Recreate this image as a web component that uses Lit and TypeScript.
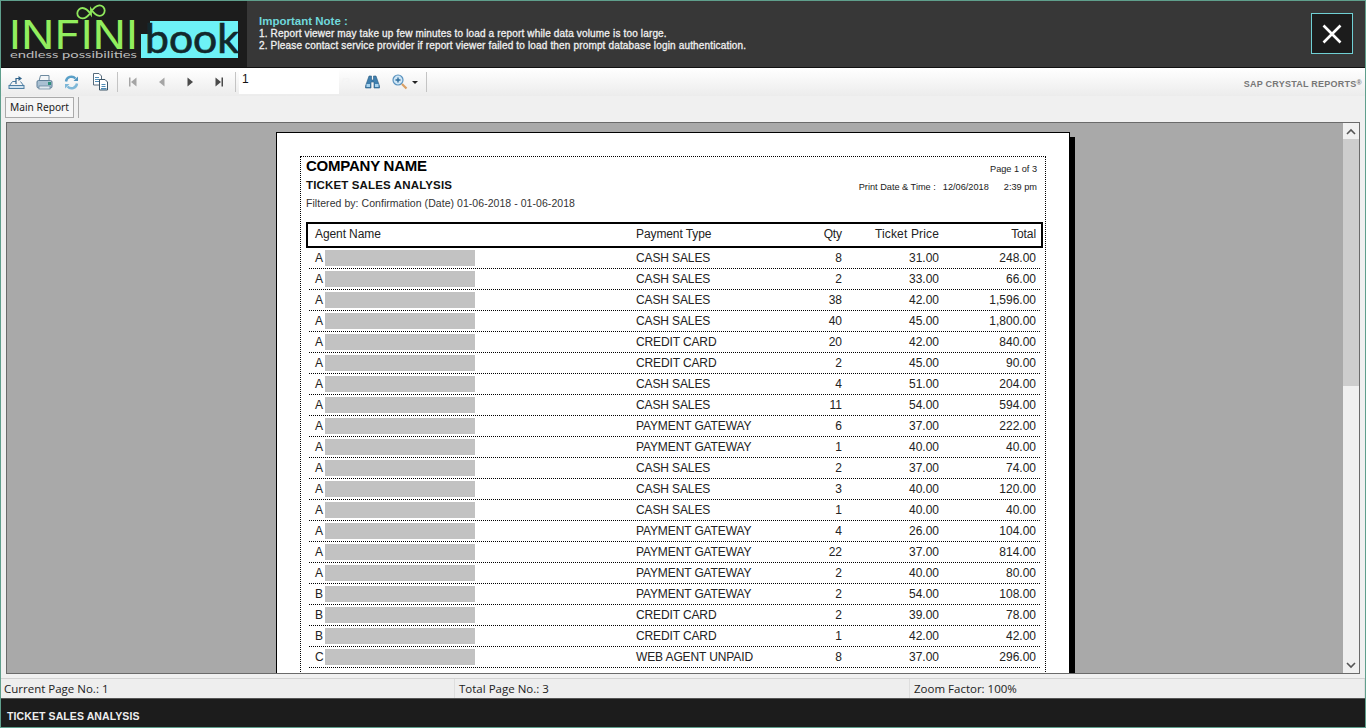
import { LitElement, html, css, svg } from "lit";
import { customElement } from "lit/decorators.js";

const rows: [string, string, string, string, string][] = [
  ["A", "CASH SALES", "8", "31.00", "248.00"],
  ["A", "CASH SALES", "2", "33.00", "66.00"],
  ["A", "CASH SALES", "38", "42.00", "1,596.00"],
  ["A", "CASH SALES", "40", "45.00", "1,800.00"],
  ["A", "CREDIT CARD", "20", "42.00", "840.00"],
  ["A", "CREDIT CARD", "2", "45.00", "90.00"],
  ["A", "CASH SALES", "4", "51.00", "204.00"],
  ["A", "CASH SALES", "11", "54.00", "594.00"],
  ["A", "PAYMENT GATEWAY", "6", "37.00", "222.00"],
  ["A", "PAYMENT GATEWAY", "1", "40.00", "40.00"],
  ["A", "CASH SALES", "2", "37.00", "74.00"],
  ["A", "CASH SALES", "3", "40.00", "120.00"],
  ["A", "CASH SALES", "1", "40.00", "40.00"],
  ["A", "PAYMENT GATEWAY", "4", "26.00", "104.00"],
  ["A", "PAYMENT GATEWAY", "22", "37.00", "814.00"],
  ["A", "PAYMENT GATEWAY", "2", "40.00", "80.00"],
  ["B", "PAYMENT GATEWAY", "2", "54.00", "108.00"],
  ["B", "CREDIT CARD", "2", "39.00", "78.00"],
  ["B", "CREDIT CARD", "1", "42.00", "42.00"],
  ["C", "WEB AGENT UNPAID", "8", "37.00", "296.00"],
];

const logo = svg`
  <svg class="logo" width="246" height="66" viewBox="0 0 246 66">
    <path d="M85 13.5c-3-4.500-5.500-6.500-8.500-6.500a5.200 5.200 0 0 0 0 10.400c3 0 5.500-2 8.500-6.500s5.500-6.500 8.500-6.500a5.200 5.200 0 0 1 0 10.400c-3 0-5.500-2-8.500-6.500z" transform="translate(5 0)" fill="none" stroke="#8fe85c" stroke-width="1.800"/>
    <text x="8" y="48" font-family="Inter, 'Liberation Sans', sans-serif" font-weight="400" font-size="39" fill="#92ee5e" textLength="129" lengthAdjust="spacingAndGlyphs">INFINI</text>
    <text x="9" y="57" font-family="Lato, 'DejaVu Sans', sans-serif" font-size="8.500" fill="#bdbdbd" textLength="127" lengthAdjust="spacingAndGlyphs">endless possibilities</text>
    <path d="M149 20H237V57H140V33H149z" fill="#6df2f6"/>
    <text x="144" y="52" font-family="Lato, 'Open Sans', sans-serif" font-weight="400" font-size="41" fill="#12282c" stroke="#12282c" stroke-width=".7" textLength="94" lengthAdjust="spacingAndGlyphs">book</text>
  </svg>`;

const iconExport = svg`<svg width="17" height="17" viewBox="0 0 17 17"><path d="M1.500 11.500 4.500 7.500H8M12.500 7.500 15.500 11.500" fill="none" stroke="#4d7ea3" stroke-width="1"/><rect x="1" y="11.500" width="15" height="3" fill="#cfe2ef" stroke="#4d7ea3"/><path d="M8 10V4.500H11" fill="none" stroke="#33658c" stroke-width="1.200"/><path d="M10.500 2 14 4.500 10.500 7z" fill="#33658c"/></svg>`;
const iconPrint = svg`<svg width="17" height="17" viewBox="0 0 17 17"><path d="M4.500 1.500H13V7H3z" fill="#f3f6f8" stroke="#6d8aa0"/><rect x="1" y="6.500" width="15" height="7.500" rx="1.500" fill="#a9c0d2" stroke="#5f7f98"/><rect x="3" y="12" width="11" height="3" fill="#dfe8ee" stroke="#5f7f98" stroke-width=".7"/><rect x="12" y="8" width="3" height="3" fill="#2f8f7a"/></svg>`;
const iconRefresh = svg`<svg width="15" height="15" viewBox="0 0 15 15"><path d="M2 6.500A5.500 5.500 0 0 1 11.500 3.500" fill="none" stroke="#5aa0c8" stroke-width="2.400"/><path d="M9.500 6H14V1.500z" fill="#4f93bd"/><path d="M13 8.500A5.500 5.500 0 0 1 3.500 11.500" fill="none" stroke="#7fb8d8" stroke-width="2.400"/><path d="M5.500 9H1v4.500z" fill="#7fb8d8"/></svg>`;
const iconCopy = svg`<svg width="17" height="18" viewBox="0 0 17 18"><path d="M1.500.5H7L9.500 3V12H1.500z" fill="#fff" stroke="#566b7c"/><path d="M3 4.500H7M3 6.500H8M3 8.500H8" stroke="#4d8ab5"/><path d="M7.500 6.500H13L15.500 9V17H7.500z" fill="#fff" stroke="#3c5466"/><path d="M9.500 11.500H13.500M9.500 13.500H13.500" stroke="#4d8ab5"/><rect x="9" y="15" width="5.500" height="1.500" fill="#4d8ab5"/></svg>`;
const navFirst = svg`<svg width="10" height="10" viewBox="0 0 10 10"><rect x="1" y="0.500" width="1.500" height="9" fill="#a5a5a5"/><path d="M8.500 0.500V9.500L3 5z" fill="#a5a5a5"/></svg>`;
const navPrev = svg`<svg width="10" height="10" viewBox="0 0 10 10"><path d="M7.500 0.500V9.500L2 5z" fill="#a5a5a5"/></svg>`;
const navNext = svg`<svg width="10" height="10" viewBox="0 0 10 10"><path d="M2.500 0.500V9.500L8 5z" fill="#4a4a4a"/></svg>`;
const navLast = svg`<svg width="10" height="10" viewBox="0 0 10 10"><path d="M1.500 0.500V9.500L7 5z" fill="#4a4a4a"/><rect x="7.500" y="0.500" width="1.500" height="9" fill="#4a4a4a"/></svg>`;
const iconFind = svg`<svg width="15" height="14" viewBox="0 0 15 14"><path d="M4 1h2.500v4H8.500V1H11l3.500 10v2H9V7H6v6H.5V11z" fill="#3f7fae" stroke="#2a5a80" stroke-width=".6"/><rect x="1.500" y="9" width="3.500" height="3" fill="#a9d3ee"/><rect x="10" y="9" width="3.500" height="3" fill="#a9d3ee"/></svg>`;
const iconZoom = svg`<svg width="16" height="16" viewBox="0 0 16 16"><circle cx="6" cy="6" r="5" fill="#cfe6f6" stroke="#5a93bf" stroke-width="1.200"/><path d="M3.500 6h5M6 3.500v5" stroke="#2f6d9c" stroke-width="1.400"/><path d="M10 10l4.500 4.500" stroke="#d9a066" stroke-width="2.200"/></svg>`;

@customElement("app-root")
export class AppRoot extends LitElement {
  static styles = css`
    :host {
      display: flex;
      flex-direction: column;
      height: 728px;
      width: 1366px;
      box-sizing: border-box;
      border: 1px solid #5f9f8c;
      background: #f0f0f0;
      overflow: hidden;
      font-family: "Liberation Sans", Arial, sans-serif;
    }
    .header {
      flex: none;
      height: 66px;
      background: #373737;
      border-bottom: 1px solid #111;
      display: flex;
      align-items: stretch;
    }
    .logo-panel { flex: none; width: 246px; background: #1c1c1c; }
    .logo { display: block; }
    .note {
      flex: 1;
      padding: 14px 0 0 12px;
      color: #f0f0f0;
      font-size: 10px;
      font-weight: normal;
      -webkit-text-stroke: 0.3px #f0f0f0;
      line-height: 11.500px;
      letter-spacing: 0.16px;
    }
    .note-title {
      color: #6fd8dc;
      -webkit-text-stroke: 0;
      font-weight: bold;
      font-size: 11.500px;
      line-height: 13px;
      letter-spacing: 0;
    }
    .close {
      flex: none;
      align-self: flex-start;
      margin: 12px 12px 0 0;
      width: 42px;
      height: 41px;
      box-sizing: border-box;
      border: 1px solid #6fd0d4;
      background: #1c1c1c;
      display: flex;
      align-items: center;
      justify-content: center;
    }
    .toolbar {
      flex: none;
      height: 28px;
      background: linear-gradient(#ffffff, #ececec);
      display: flex;
      align-items: center;
    }
    .tool {
      flex: none;
      display: flex;
      align-items: center;
      justify-content: center;
    }
    .tool svg { display: block; }
    .t-a { width: 27px; margin-left: 2px; }
    .t-b { width: 28px; }
    .t-c { width: 27px; }
    .t-d { width: 30px; }
    .sep { flex: none; width: 1px; height: 20px; background: #c4c4c4; }
    .s1 { margin: 0 1px 0 2px; }
    .s2 { margin: 0 0 0 2px; }
    .s3 { margin: 0 0 0 6px; }
    .nav { width: 28.500px; }
    .pageinput {
      flex: none;
      width: 100px;
      height: 25px;
      margin-left: 3px;
      background: #fff;
      box-sizing: border-box;
      padding: 3px 0 0 3px;
      font-size: 12px;
      color: #111;
      align-self: flex-start;
      margin-top: 1px;
    }
    .of { flex: none; width: 19px; padding-left: 2px; box-sizing: border-box; color: #f4f4f4; font-size: 11px; }
    .t-find { width: 20px; margin-left: 4px; }
    .t-zoom { width: 28px; margin-left: 10px; justify-content: flex-start; gap: 4px; }
    .caret { width: 0; height: 0; border: 3px solid transparent; border-top: 3.500px solid #222; border-bottom: 0; }
    .brand {
      margin-left: auto;
      margin-right: 3px;
      margin-top: 3px;
      font-size: 9px;
      font-weight: bold;
      color: #777;
      letter-spacing: 0.25px;
    }
    .brand sup { font-size: 7px; line-height: 0; vertical-align: 2px; }
    .tabs {
      flex: none;
      height: 26px;
      display: flex;
      align-items: flex-start;
      padding-left: 4px;
      background: #f0f0f0;
    }
    .tab {
      height: 21px;
      width: 69px;
      box-sizing: border-box;
      border: 1px solid #aaa;
      background: #f6f6f6;
      font-family: "Noto Sans", sans-serif;
      font-size: 10.200px;
      line-height: 19px;
      text-align: center;
      color: #222;
      margin-top: 1px;
    }
    .tab-sep { width: 1px; height: 21px; background: #aaa; margin-left: 4px; margin-top: 1px; }
    .viewer {
      flex: none;
      height: 552px;
      margin: 0 5px;
      box-sizing: border-box;
      border: 1px solid #6a6a6a;
      display: flex;
      background: #a9a9a9;
      overflow: hidden;
    }
    .canvas {
      flex: 1;
      min-width: 0;
      overflow: hidden;
      padding: 9px 0 0 269px;
    }
    .page {
      width: 794px;
      height: 700px;
      box-sizing: border-box;
      background: #fff;
      border: 1px solid #000;
      box-shadow: 5px 5px 0 #000;
      padding: 23px 23px 0 23px;
    }
    .report {
      height: 600px;
      border: 1px dotted #000;
      box-sizing: border-box;
      padding: 0 2px 0 5px;
      color: #1a1a1a;
    }
    .top {
      display: grid;
      grid-template-columns: 1fr auto;
      height: 65px;
    }
    .company { font-size: 15px; font-weight: bold; color: #000; line-height: 17px; letter-spacing: -0.23px; }
    .title { font-size: 11.500px; font-weight: bold; color: #111; line-height: 14px; margin-top: 4px; letter-spacing: 0.15px; }
    .filter { font-size: 10.500px; line-height: 13px; margin-top: 5px; letter-spacing: 0.05px; color: #333; }
    .meta { font-size: 9.200px; text-align: right; padding-right: 6px; padding-top: 7px; }
    .meta-time { display: flex; justify-content: flex-end; gap: 15px; margin-top: 8px; }
    .meta-label { margin-right: -8px; }
    .cols {
      display: grid;
      grid-template-columns: 328px 150px 56px 97px 97px;
      align-items: center;
    }
    .thead {
      height: 26px;
      box-sizing: border-box;
      border: 2px solid #000;
      font-size: 12px;
      padding-bottom: 2px;
      color: #222;
      letter-spacing: -0.1px;
    }
    .thead .c0 { padding-left: 7px; }
    .num { text-align: right; }
    .thead .tp { letter-spacing: 0.15px; }
    .row {
      height: 21px;
      box-sizing: border-box;
      border-bottom: 1px dotted #000;
      margin: 0 3px;
      font-size: 12px;
      color: #222;
      grid-template-columns: 327px 150px 56px 97px 97px;
    }
    .pay { letter-spacing: -0.12px; }
    .agent { display: flex; align-items: center; padding-left: 6px; gap: 2px; }
    .agent b { font-weight: normal; width: 8px; }
    .mask { width: 150px; height: 16px; background: #c2c2c2; }
    .scroll {
      flex: none;
      width: 16px;
      background: #f0f0f0;
      display: flex;
      flex-direction: column;
      align-items: stretch;
    }
    .arrow { flex: none; height: 16px; display: flex; align-items: center; justify-content: center; }
    .thumb { flex: none; height: 247px; background: #cdcdcd; }
    .track { flex: 1; }
    .status {
      flex: none;
      height: 20px;
      margin-top: 4px;
      border-top: 1px solid #d2d2d2;
      display: grid;
      grid-template-columns: 454px 455px 1fr;
      box-sizing: border-box;
      font-family: "Open Sans", "Noto Sans", sans-serif;
      font-size: 11.500px;
      color: #222;
      background: #eeeeee;
    }
    .status div { padding: 2px 0 0 3px; line-height: 16px; border-right: 1px solid #dedede; }
    .status div + div { padding-left: 4px; }
    .footer {
      flex: 1;
      background: #1c1c1c;
      border-top: 1px solid #555;
      color: #eee;
      font-size: 10.500px;
      font-weight: bold;
      letter-spacing: 0.1px;
      padding: 11px 0 0 6px;
      box-sizing: border-box;
    }
  `;

  render() {
    return html`
      <div class="header">
        <div class="logo-panel">${logo}</div>
        <div class="note">
          <div class="note-title">Important Note :</div>
          <div>1. Report viewer may take up few minutes to load a report while data volume is too large.</div>
          <div>2. Please contact service provider if report viewer failed to load then prompt database login authentication.</div>
        </div>
        <div class="close">
          <svg width="22" height="22" viewBox="0 0 22 22"><path d="M2.500 2.500 19.500 19.500M19.500 2.500 2.500 19.500" stroke="#fff" stroke-width="2.600"/></svg>
        </div>
      </div>
      <div class="toolbar">
        <div class="tool t-a">${iconExport}</div>
        <div class="tool t-b">${iconPrint}</div>
        <div class="tool t-c">${iconRefresh}</div>
        <div class="tool t-d">${iconCopy}</div>
        <div class="sep s1"></div>
        <div class="tool nav">${navFirst}</div>
        <div class="tool nav">${navPrev}</div>
        <div class="tool nav">${navNext}</div>
        <div class="tool nav">${navLast}</div>
        <div class="sep s2"></div>
        <div class="pageinput">1</div>
        <div class="of">/3</div>
        <div class="tool t-find">${iconFind}</div>
        <div class="tool t-zoom">${iconZoom}<span class="caret"></span></div>
        <div class="sep s3"></div>
        <div class="brand">SAP CRYSTAL REPORTS<sup>®</sup></div>
      </div>
      <div class="tabs">
        <div class="tab">Main Report</div>
        <div class="tab-sep"></div>
      </div>
      <div class="viewer">
        <div class="canvas">
          <div class="page">
            <div class="report">
              <div class="top">
                <div>
                  <div class="company">COMPANY NAME</div>
                  <div class="title">TICKET SALES ANALYSIS</div>
                  <div class="filter">Filtered by: Confirmation (Date) 01-06-2018 - 01-06-2018</div>
                </div>
                <div class="meta">
                  <div>Page 1 of 3</div>
                  <div class="meta-time"><span class="meta-label">Print Date &amp; Time :</span><span>12/06/2018</span><span>2:39 pm</span></div>
                </div>
              </div>
              <div class="cols thead">
                <div class="c0">Agent Name</div>
                <div>Payment Type</div>
                <div class="num">Qty</div>
                <div class="num tp">Ticket Price</div>
                <div class="num">Total</div>
              </div>
              ${rows.map(
                (r) => html`
                  <div class="cols row">
                    <div class="agent"><b>${r[0]}</b><span class="mask"></span></div>
                    <div class="pay">${r[1]}</div>
                    <div class="num">${r[2]}</div>
                    <div class="num">${r[3]}</div>
                    <div class="num">${r[4]}</div>
                  </div>
                `
              )}
            </div>
          </div>
        </div>
        <div class="scroll">
          <div class="arrow"><svg width="10" height="7" viewBox="0 0 10 7"><path d="M1 6 5 2 9 6" fill="none" stroke="#555" stroke-width="1.600"/></svg></div>
          <div class="thumb"></div>
          <div class="track"></div>
          <div class="arrow"><svg width="10" height="7" viewBox="0 0 10 7"><path d="M1 1 5 5 9 1" fill="none" stroke="#555" stroke-width="1.600"/></svg></div>
        </div>
      </div>
      <div class="status">
        <div>Current Page No.: 1</div>
        <div>Total Page No.: 3</div>
        <div>Zoom Factor: 100%</div>
      </div>
      <div class="footer">TICKET SALES ANALYSIS</div>
    `;
  }
}
